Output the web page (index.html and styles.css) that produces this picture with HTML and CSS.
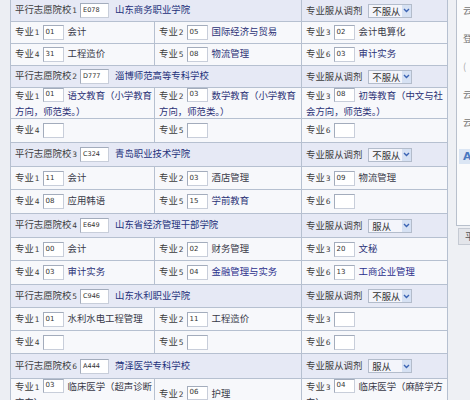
FILE: index.html
```html
<!DOCTYPE html>
<html>
<head>
<meta charset="utf-8">
<link rel="stylesheet" href="styles.css">
</head>
<body>
<div class="page">
  <div class="gutter"></div>
  <table class="form">
    <colgroup><col class="c1"><col class="c2"><col class="c3"></colgroup>
    <tr class="school r1">
      <td colspan="2"><span class="lbl">平行志愿院校<i>1</i></span><span class="code wide">E078</span><span class="sname">山东商务职业学院</span></td>
      <td><span class="lbl">专业服从调剂</span><span class="sel"><span class="sv">不服从</span><span class="arr"><svg width="7" height="5" viewBox="0 0 7 5"><path d="M1 1 L3.5 3.5 L6 1" fill="none" stroke="#3c64b4" stroke-width="1.4"/></svg></span></span></td>
    </tr>
    <tr class="r22">
      <td><span class="lbl">专业<i>1</i></span><span class="code">01</span><span class="mj dk">会计</span></td>
      <td><span class="lbl">专业<i>2</i></span><span class="code">05</span><span class="mj">国际经济与贸易</span></td>
      <td><span class="lbl">专业<i>3</i></span><span class="code">02</span><span class="mj dk">会计电算化</span></td>
    </tr>
    <tr class="r22">
      <td><span class="lbl">专业<i>4</i></span><span class="code">31</span><span class="mj dk">工程造价</span></td>
      <td><span class="lbl">专业<i>5</i></span><span class="code">08</span><span class="mj">物流管理</span></td>
      <td><span class="lbl">专业<i>6</i></span><span class="code">03</span><span class="mj">审计实务</span></td>
    </tr>
    <tr class="school r22">
      <td colspan="2"><span class="lbl">平行志愿院校<i>2</i></span><span class="code wide">D777</span><span class="sname">淄博师范高等专科学校</span></td>
      <td><span class="lbl">专业服从调剂</span><span class="sel"><span class="sv">不服从</span><span class="arr"><svg width="7" height="5" viewBox="0 0 7 5"><path d="M1 1 L3.5 3.5 L6 1" fill="none" stroke="#3c64b4" stroke-width="1.4"/></svg></span></span></td>
    </tr>
    <tr class="r31 two">
      <td><span class="lbl">专业<i>1</i></span><span class="code">01</span><span class="mj">语文教育（小学教育方向，师范类。）</span></td>
      <td><span class="lbl">专业<i>2</i></span><span class="code">03</span><span class="mj">数学教育（小学教育方向，师范类。）</span></td>
      <td><span class="lbl">专业<i>3</i></span><span class="code">08</span><span class="mj">初等教育（中文与社会方向，师范类。）</span></td>
    </tr>
    <tr class="r24">
      <td><span class="lbl">专业<i>4</i></span><span class="code"></span></td>
      <td><span class="lbl">专业<i>5</i></span><span class="code"></span></td>
      <td><span class="lbl">专业<i>6</i></span><span class="code"></span></td>
    </tr>
    <tr class="school r24">
      <td colspan="2"><span class="lbl">平行志愿院校<i>3</i></span><span class="code wide">C324</span><span class="sname">青岛职业技术学院</span></td>
      <td><span class="lbl">专业服从调剂</span><span class="sel"><span class="sv">不服从</span><span class="arr"><svg width="7" height="5" viewBox="0 0 7 5"><path d="M1 1 L3.5 3.5 L6 1" fill="none" stroke="#3c64b4" stroke-width="1.4"/></svg></span></span></td>
    </tr>
    <tr class="r23">
      <td><span class="lbl">专业<i>1</i></span><span class="code">11</span><span class="mj dk">会计</span></td>
      <td><span class="lbl">专业<i>2</i></span><span class="code">03</span><span class="mj dk">酒店管理</span></td>
      <td><span class="lbl">专业<i>3</i></span><span class="code">09</span><span class="mj dk">物流管理</span></td>
    </tr>
    <tr class="r24">
      <td><span class="lbl">专业<i>4</i></span><span class="code">08</span><span class="mj dk">应用韩语</span></td>
      <td><span class="lbl">专业<i>5</i></span><span class="code">15</span><span class="mj">学前教育</span></td>
      <td><span class="lbl">专业<i>6</i></span><span class="code"></span></td>
    </tr>
    <tr class="school r24">
      <td colspan="2"><span class="lbl">平行志愿院校<i>4</i></span><span class="code wide">E649</span><span class="sname">山东省经济管理干部学院</span></td>
      <td><span class="lbl">专业服从调剂</span><span class="sel"><span class="sv">服从</span><span class="arr"><svg width="7" height="5" viewBox="0 0 7 5"><path d="M1 1 L3.5 3.5 L6 1" fill="none" stroke="#3c64b4" stroke-width="1.4"/></svg></span></span></td>
    </tr>
    <tr class="r23">
      <td><span class="lbl">专业<i>1</i></span><span class="code">00</span><span class="mj dk">会计</span></td>
      <td><span class="lbl">专业<i>2</i></span><span class="code">02</span><span class="mj dk">财务管理</span></td>
      <td><span class="lbl">专业<i>3</i></span><span class="code">20</span><span class="mj">文秘</span></td>
    </tr>
    <tr class="r24">
      <td><span class="lbl">专业<i>4</i></span><span class="code">03</span><span class="mj">审计实务</span></td>
      <td><span class="lbl">专业<i>5</i></span><span class="code">04</span><span class="mj ul">金融管理与实务</span></td>
      <td><span class="lbl">专业<i>6</i></span><span class="code">13</span><span class="mj ul">工商企业管理</span></td>
    </tr>
    <tr class="school r23">
      <td colspan="2"><span class="lbl">平行志愿院校<i>5</i></span><span class="code wide">C946</span><span class="sname">山东水利职业学院</span></td>
      <td><span class="lbl">专业服从调剂</span><span class="sel"><span class="sv">不服从</span><span class="arr"><svg width="7" height="5" viewBox="0 0 7 5"><path d="M1 1 L3.5 3.5 L6 1" fill="none" stroke="#3c64b4" stroke-width="1.4"/></svg></span></span></td>
    </tr>
    <tr class="r23">
      <td><span class="lbl">专业<i>1</i></span><span class="code">01</span><span class="mj dk">水利水电工程管理</span></td>
      <td><span class="lbl">专业<i>2</i></span><span class="code">11</span><span class="mj dk">工程造价</span></td>
      <td><span class="lbl">专业<i>3</i></span><span class="code"></span></td>
    </tr>
    <tr class="r23">
      <td><span class="lbl">专业<i>4</i></span><span class="code"></span></td>
      <td><span class="lbl">专业<i>5</i></span><span class="code"></span></td>
      <td><span class="lbl">专业<i>6</i></span><span class="code"></span></td>
    </tr>
    <tr class="school r25">
      <td colspan="2"><span class="lbl">平行志愿院校<i>6</i></span><span class="code wide">A444</span><span class="sname">菏泽医学专科学校</span></td>
      <td><span class="lbl">专业服从调剂</span><span class="sel"><span class="sv">服从</span><span class="arr"><svg width="7" height="5" viewBox="0 0 7 5"><path d="M1 1 L3.5 3.5 L6 1" fill="none" stroke="#3c64b4" stroke-width="1.4"/></svg></span></span></td>
    </tr>
    <tr class="r31 two">
      <td><span class="lbl">专业<i>1</i></span><span class="code">03</span><span class="mj dk">临床医学（超声诊断方向）</span></td>
      <td><span class="lbl">专业<i>2</i></span><span class="code">06</span><span class="mj dk">护理</span></td>
      <td><span class="lbl">专业<i>3</i></span><span class="code">04</span><span class="mj dk">临床医学（麻醉学方向）</span></td>
    </tr>
  </table>
  <div class="side">
    <div class="panel">
      <div class="pl">云</div>
      <div class="pl">登</div>
      <div class="pl sm">(</div>
      <div class="pl">云</div>
      <div class="pl">云</div>
      <div class="pa">A</div>
    </div>
    <div class="pbar">平</div>
  </div>
</div>
</body>
</html>
```

FILE: styles.css
```css
html, body {
  margin: 0;
  padding: 0;
}
body {
  background: #eef0f4;
  font-family: "Noto Sans CJK SC", "Noto Sans", sans-serif;
  font-size: 9.4px;
  color: #3a3a3a;
}
.page {
  display: flex;
  width: 470px;
  height: 400px;
  overflow: hidden;
  background: #eef0f4;
}
.gutter {
  flex: 0 0 10px;
  background: #eceef3;
}
.form {
  flex: 0 0 437px;
  width: 437px;
  border-collapse: collapse;
  table-layout: fixed;
  margin-top: -1px;
  align-self: flex-start;
}
.c1 { width: 144px; }
.c2 { width: 147px; }
.c3 { width: 146px; }
.form td {
  border: 1px solid #b6c0d0;
  background: #f7f8fb;
  padding: 0 0 0 4px;
  vertical-align: middle;
  line-height: 13px;
  white-space: nowrap;
  overflow: hidden;
}
.form tr.two td {
  white-space: normal;
  line-height: 14px;
  padding-top: 0;
}
.form tr.two .code {
  height: 12px;
  line-height: 11px;
}
.form tr.school td {
  background: #e6e9f5;
}
.r1 { height: 22px; }
.r22 { height: 22px; }
.r23 { height: 23px; }
.r24 { height: 24px; }
.r25 { height: 25px; }
.r31 { height: 31px; }
.lbl {
  color: #3c3c3c;
}
.lbl i {
  font-style: normal;
  font-family: "DejaVu Sans", sans-serif;
  font-size: 7.5px;
  margin-left: 1px;
}
.code {
  display: inline-block;
  width: 17px;
  height: 13px;
  border: 1px solid #a3acbc;
  border-right-color: #c8ceda;
  border-bottom-color: #c8ceda;
  background: #fff;
  font-family: "DejaVu Sans", sans-serif;
  font-size: 7px;
  line-height: 12px;
  padding-left: 2px;
  color: #333;
  vertical-align: top;
  margin: 0 4px 0 3px;
}
.wide {
  width: 25px;
  margin-right: 6px;
  font-size: 6.5px;
}
.sname {
  color: #22307a;
}
.mj {
  color: #2a3176;
}
.mj.dk {
  color: #383848;
}
.mj.ul {
  color: #2a2f8c;
}
.sel {
  display: inline-flex;
  align-items: center;
  width: 44px;
  height: 14px;
  margin-left: 6px;
  border: 1px solid #b3bccb;
  background: #f4f5fb;
  vertical-align: top;
  box-sizing: border-box;
}
.sv {
  flex: 1;
  padding-left: 3px;
  color: #333;
  line-height: 12px;
}
.arr {
  display: flex;
  align-items: center;
  justify-content: center;
  width: 9px;
  height: 12px;
  background: #d6e1f3;
}
.side {
  flex: 0 0 120px;
  margin-left: 8px;
  display: flex;
  flex-direction: column;
}
.panel {
  height: 226px;
  box-sizing: border-box;
  border: 1px solid #b8c0cc;
  border-top: none;
  background: #fafbfc;
  padding: 3px 0 0 6px;
}
.pl {
  height: 28px;
  line-height: 14px;
  color: #777;
}
.pl.sm {
  color: #aaa;
}
.pa {
  display: inline-block;
  margin-top: 6px;
  margin-left: -4px;
  padding: 1px 4px;
  background: #dbe6f4;
  color: #4a78c0;
  font-family: "DejaVu Sans", sans-serif;
  font-weight: bold;
  font-size: 11px;
}
.pbar {
  margin-top: 2px;
  margin-left: 2px;
  height: 15px;
  line-height: 15px;
  padding-left: 6px;
  background: #e3e5ea;
  border: 1px solid #c5cad3;
  color: #555;
}
```
